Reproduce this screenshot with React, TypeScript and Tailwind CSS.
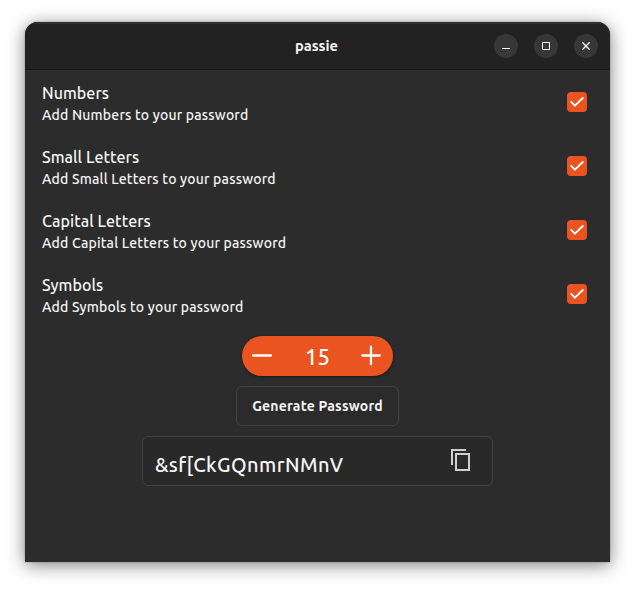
const options = ["Numbers", "Small Letters", "Capital Letters", "Symbols"];

function WindowButton({ children }: { children: React.ReactNode }) {
  return (
    <button className="flex size-6 items-center justify-center rounded-full bg-[#373737]">
      <svg width="24" height="24" viewBox="0 0 24 24" fill="none" stroke="#fff">
        {children}
      </svg>
    </button>
  );
}

function Option({ title }: { title: string }) {
  return (
    <div className="flex h-16 items-center justify-between pr-[23px] pl-[17px]">
      <div className="pt-1 whitespace-nowrap">
        <div className="h-[22px] text-[16px] leading-[22px] font-medium tracking-[0.05px]">{title}</div>
        <div className="h-[22px] text-[14px] leading-[22px] font-medium tracking-[0.19px]">
          Add {title} to your password
        </div>
      </div>
      <button role="checkbox" aria-checked="true" aria-label={title} className="size-5 rounded-[4px] bg-[#e95420]">
        <svg width="20" height="20" viewBox="0 0 20 20" fill="none" stroke="#fff" strokeWidth="2">
          <path d="M3.7 9.4 8 13.7 16.3 5.4" />
        </svg>
      </button>
    </div>
  );
}

export default function App() {
  return (
    <div className="h-[590px] w-[635px] overflow-hidden bg-white px-[25px] pt-[22px] font-['Ubuntu','Noto_Sans',sans-serif] text-[#f5f5f5]">
      <main className="h-[540px] w-[585px] overflow-hidden rounded-t-[13px] bg-[#2c2c2c] shadow-[0_3px_18px_rgba(0,0,0,0.5),0_0_2px_rgba(0,0,0,0.3)]">
        <header className="grid h-12 grid-cols-[1fr_auto_1fr] items-center border-t-2 border-b border-t-[#303030] border-b-[#191919] bg-[#222] pr-3 pb-px">
          <span />
          <h1 className="pl-2.5 text-[14.67px] leading-5 font-bold">passie</h1>
          <div className="flex justify-end gap-4">
            <WindowButton>
              <path d="M8 14.5h8" />
            </WindowButton>
            <WindowButton>
              <path d="M8.5 8.5h7v7h-7z" />
            </WindowButton>
            <WindowButton>
              <path d="m8.3 8.3 7.4 7.4M15.7 8.3l-7.4 7.4" strokeWidth="1.3" />
            </WindowButton>
          </div>
        </header>
        {options.map((title) => (
          <Option key={title} title={title} />
        ))}
        <div className="flex flex-col items-center gap-2.5 pt-2.5">
          <div className="flex h-10 w-[151px] items-center justify-between rounded-full bg-[#e95420] text-white shadow-[0_1px_3px_rgba(0,0,0,0.4)]">
            <button aria-label="Decrease">
              <svg width="40" height="40" viewBox="0 0 40 40" stroke="#fff" strokeWidth="2.3" strokeLinecap="round">
                <path d="M11 19.5h18" />
              </svg>
            </button>
            <span className="pt-0.5 text-[22px] leading-8 font-medium">15</span>
            <button aria-label="Increase">
              <svg width="40" height="40" viewBox="0 0 40 40" stroke="#fff" strokeWidth="2.3" strokeLinecap="round">
                <path d="M9.3 19.5h17.5M18 10.7v17.5" />
              </svg>
            </button>
          </div>
          <button className="flex h-10 w-[163px] items-center justify-center rounded-[6px] border border-[#424242] bg-[#2b2b2b] text-[14px] leading-5 font-bold tracking-[0.21px] whitespace-nowrap">
            Generate Password
          </button>
          <div className="flex h-[50px] w-[351px] items-center justify-between rounded-[6px] border border-[#424242] bg-[#292929] pr-[19px] pl-3">
            <span className="pt-[7px] text-[20px] leading-7 font-medium tracking-[0.42px]">&amp;sf[CkGQnmrNMnV</span>
            <button aria-label="Copy" className="pb-0.5">
              <svg width="24" height="24" viewBox="0 0 24 24" fill="none" stroke="#cfcfcf" strokeWidth="2">
                <path d="M3 17V2h14M7 6h13v16H7z" />
              </svg>
            </button>
          </div>
        </div>
      </main>
    </div>
  );
}
